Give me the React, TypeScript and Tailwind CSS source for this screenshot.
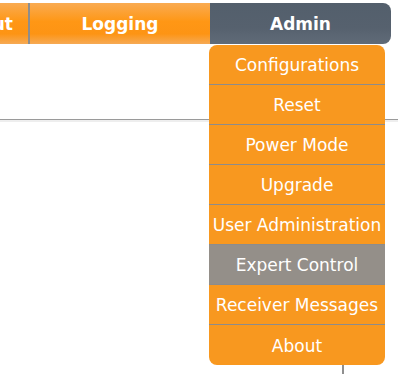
import React from "react";

const MENU = [
  "Configurations",
  "Reset",
  "Power Mode",
  "Upgrade",
  "User Administration",
  "Expert Control",
  "Receiver Messages",
  "About",
];

const ACTIVE = "Expert Control";

export default function App() {
  return (
    <div className="relative h-[374px] w-[398px] overflow-hidden bg-white font-['DejaVu_Sans',sans-serif]">
      {/* Top nav */}
      <div className="pt-[3px]">
        <div className="flex h-[41px] text-[17px] font-bold text-white">
          <div className="flex w-[28px] justify-end items-center overflow-hidden whitespace-nowrap pr-[15px] pt-[3px] bg-[linear-gradient(#f9ab52,#ff9715_45%,#fd9414_75%,#f6aa55)]">
            About
          </div>
          <div className="w-[2px] bg-[#8d8d8d]" />
          <div className="flex w-[180px] items-center justify-center pt-[3px] bg-[linear-gradient(#f9ab52,#ff9715_45%,#fd9414_75%,#f6aa55)]">
            Logging
          </div>
          <div className="flex w-[181px] items-center justify-center rounded-r-[8px] pt-[3px] bg-[linear-gradient(#535f6c,#56616e_60%,#606b78)]">
            Admin
          </div>
        </div>
      </div>

      {/* Page content under the menu */}
      <div className="mt-[75px] h-[1px] bg-[#9a9a9a]" />
      <div className="h-[2px] bg-[#eeeeee]" />
      <div className="ml-[342px] mt-[200px] h-[60px] w-[2px] bg-[#8f8f8f]" />

      {/* Admin dropdown */}
      <div className="absolute left-[209px] top-[45px] w-[176px] overflow-hidden rounded-[8px] bg-[#f8981f] text-[17px] text-white">
        {MENU.map((item, i) => (
          <div
            key={item}
            className={
              "flex h-[40px] items-center justify-center whitespace-nowrap pt-[3px] " +
              (i < MENU.length - 1 ? "border-b border-[#8c8c8c] " : "h-[38px] ") +
              (item === ACTIVE ? "bg-[#948f89]" : "")
            }
          >
            {item}
          </div>
        ))}
      </div>
    </div>
  );
}
